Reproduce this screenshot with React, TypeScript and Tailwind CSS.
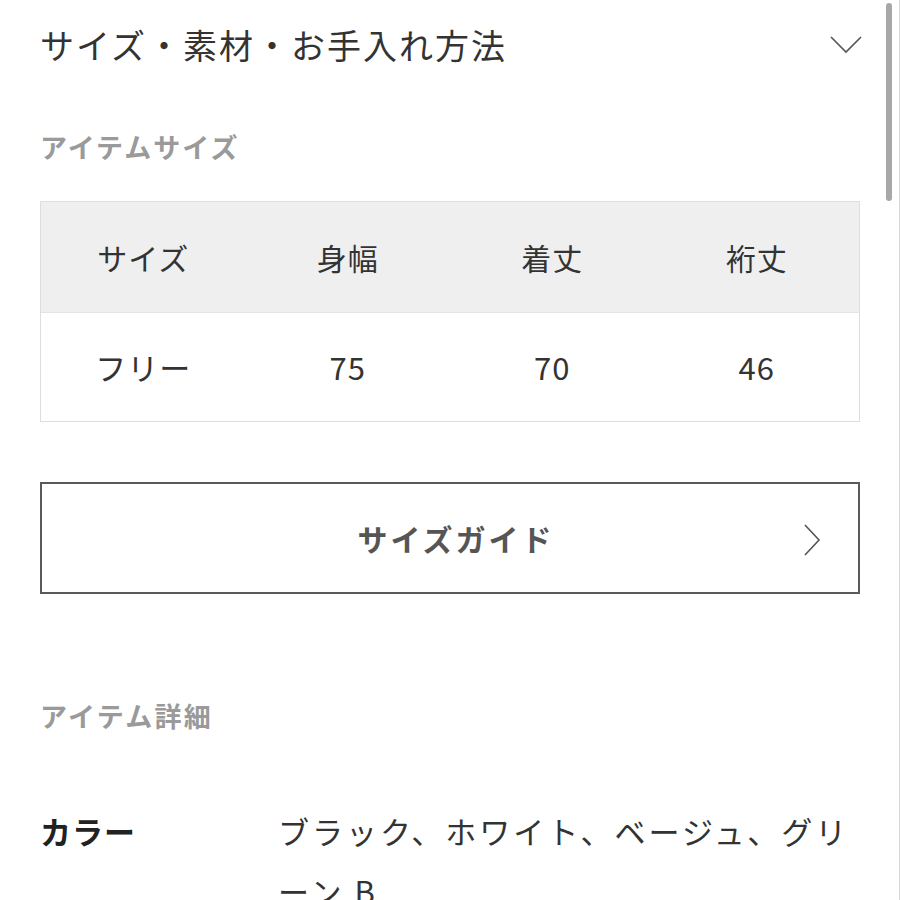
const font = { fontFamily: '"Noto Sans CJK JP", "Noto Sans", sans-serif' }

const sizeHead = ['サイズ', '身幅', '着丈', '裄丈']
const sizeRow = ['フリー', '75', '70', '46']

export default function App() {
  return (
    <div className="relative w-[900px] h-[900px] overflow-hidden bg-white" style={font}>
      {/* scroll indicator */}
      <div className="absolute right-[8px] top-[3px] w-[6px] h-[198px] rounded-full bg-[#a8a8a8]" />
      <div className="absolute right-0 top-0 w-px h-full bg-[#d8d8d8]" />

      <div className="px-[40px]">
        <div className="flex h-[90px] items-center justify-between">
          <h2 className="text-[34px] leading-none tracking-[2px] text-[#333]">サイズ・素材・お手入れ方法</h2>
          <svg width="32" height="18" viewBox="0 0 32 18" fill="none" className="mr-[-2px]">
            <polyline points="1,1 16,16 31,1" stroke="#555" strokeWidth="1.6" />
          </svg>
        </div>

        <div className="mt-[38px] text-[27px] leading-[38px] font-bold tracking-[2px] text-[#9a9a9a]">アイテムサイズ</div>

        <div className="mt-[35px] border border-[#dedede]">
          <div className="grid h-[110px] grid-cols-4 items-center bg-[#efefef] text-center text-[30px] tracking-[1px] text-[#333]">
            {sizeHead.map((h) => (
              <div key={h}>{h}</div>
            ))}
          </div>
          <div className="grid h-[109px] grid-cols-4 items-center border-t border-[#e4e4e4] text-center text-[31px] tracking-[1px] text-[#333]">
            {sizeRow.map((v) => (
              <div key={v}>{v}</div>
            ))}
          </div>
        </div>

        <button className="relative mt-[60px] flex h-[112px] w-full items-center justify-center border-2 border-[#5a5a5a] bg-white">
          <span className="pl-[12px] text-[30px] font-bold tracking-[3px] text-[#555]">サイズガイド</span>
          <svg width="18" height="32" viewBox="0 0 18 32" fill="none" className="absolute right-[37px] top-[40px]">
            <polyline points="2,1 16,16 2,31" stroke="#555" strokeWidth="1.6" />
          </svg>
        </button>

        <div className="mt-[103px] text-[27px] leading-[38px] font-bold tracking-[2.3px] text-[#9a9a9a]">アイテム詳細</div>

        <div className="mt-[66px] flex">
          <div className="w-[238px] shrink-0 text-[31px] leading-[60px] font-bold tracking-[1px] text-[#222]">カラー</div>
          <div className="flex-1 text-[31px] leading-[60px] tracking-[3px] text-[#333] [line-break:loose]">
            ブラック、ホワイト、ベージュ、グリーン B
          </div>
        </div>
      </div>
    </div>
  )
}
